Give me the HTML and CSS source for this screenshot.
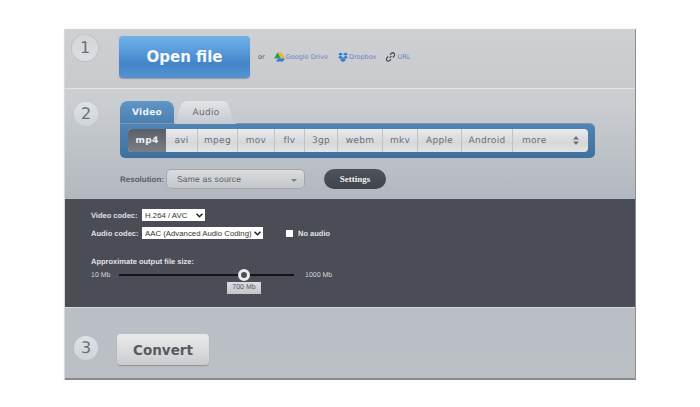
FILE: index.html
```html
<!DOCTYPE html>
<html lang="en">
<head>
    <meta charset="UTF-8">
    <title>Video Converter</title>
    <link rel="stylesheet" href="styles.css">
</head>
<body>
    <main class="card">
        <section class="step step-open">
            <div class="num num-1">1</div>
            <button class="open-btn">Open file</button>
            <div class="sources">
                <span class="or">or</span>
                <a class="source source-drive">
                    <svg width="11" height="10" viewBox="0 0 22 20"><path d="M7 1h8l7 12h-8z" fill="#e8b82c"/><path d="M7 1l7 12H0z" fill="#2f9e55"/><path d="M4 19l4-6h14l-4 6z" fill="#3b78d8"/></svg>
                    Google Drive
                </a>
                <a class="source source-box">
                    <svg width="10" height="10" viewBox="0 0 20 20" fill="#2b7fd4"><path d="M5 1l5 3-5 3.500L0 4.500zM15 1l5 3.500-5 3-5-3.500zM0 10.500L5 7.500l5 3.500-5 3zM20 10.500l-5-3-5 3.500 5 3zM5 15l5-3 5 3v2l-5 3-5-3z"/></svg>
                    Dropbox
                </a>
                <a class="source source-url">
                    <svg width="9" height="10" viewBox="0 0 20 20" fill="none" stroke="#44474c" stroke-width="2.800"><path d="M8 12l4-4"/><path d="M9 5l3-3a4 4 0 0 1 6 6l-3 3"/><path d="M11 15l-3 3a4 4 0 0 1-6-6l3-3"/></svg>
                    URL
                </a>
            </div>
        </section>

        <section class="step step-format">
            <div class="num num-2">2</div>
            <div class="format-main">
                <div class="tabs">
                    <div class="tab tab-on">Video</div>
                    <div class="tab tab-off">Audio</div>
                </div>
                <div class="panel">
                    <div class="formats">
                        <div class="fmt fmt-on">mp4</div>
                        <div class="fmt">avi</div>
                        <div class="fmt">mpeg</div>
                        <div class="fmt">mov</div>
                        <div class="fmt">flv</div>
                        <div class="fmt">3gp</div>
                        <div class="fmt">webm</div>
                        <div class="fmt">mkv</div>
                        <div class="fmt">Apple</div>
                        <div class="fmt">Android</div>
                        <div class="fmt fmt-more">more
                            <svg width="6" height="9" viewBox="0 0 6 9" fill="#6b6e73"><path d="M3 0l3 3.500H0zM3 9L0 5.500h6z"/></svg>
                        </div>
                    </div>
                </div>
                <div class="res-row">
                    <span class="res-label">Resolution:</span>
                    <div class="res-select">Same as source<i class="caret"></i></div>
                    <button class="settings-btn">Settings</button>
                </div>
            </div>
        </section>

        <section class="advanced">
            <div class="codec-row">
                <label class="codec-label">Video codec:</label>
                <span class="select-wrap">
                    <select class="codec-select codec-video"><option>H.264 / AVC</option></select>
                    <svg class="chevron" width="7" height="5" viewBox="0 0 7 5" fill="none" stroke="#222222" stroke-width="1.500"><path d="M0.500 0.800L3.500 3.800 6.500 0.800"/></svg>
                </span>
            </div>
            <div class="codec-row">
                <label class="codec-label">Audio codec:</label>
                <span class="select-wrap">
                    <select class="codec-select codec-audio"><option>AAC (Advanced Audio Coding)</option></select>
                    <svg class="chevron" width="7" height="5" viewBox="0 0 7 5" fill="none" stroke="#222222" stroke-width="1.500"><path d="M0.500 0.800L3.500 3.800 6.500 0.800"/></svg>
                </span>
                <span class="check"></span>
                <span class="no-audio">No audio</span>
            </div>
            <div class="size-title">Approximate output file size:</div>
            <div class="size-row">
                <span class="size-min">10 Mb</span>
                <div class="slider">
                    <span class="thumb"></span>
                    <span class="tip">700 Mb</span>
                </div>
                <span class="size-max">1000 Mb</span>
            </div>
        </section>

        <section class="step step-convert">
            <div class="num num-3">3</div>
            <button class="convert-btn">Convert</button>
        </section>
    </main>
</body>
</html>
```

FILE: styles.css
```css
body {
    margin: 0;
    background-color: #ffffff;
    font-family: "DejaVu Sans", Verdana, sans-serif;
    color: #55585e;
    text-rendering: geometricPrecision;
}
button {
    font-family: inherit;
    padding: 0;
    cursor: pointer;
}
.card {
    width: 570px;
    height: 349px;
    margin: 29px 0 0 65px;
    border-right: 1px solid #8a8d91;
    border-bottom: 2px solid #85888c;
    box-shadow: -1px 0 1px #d8d9db;
    display: flex;
    flex-direction: column;
}
.step {
    display: flex;
    box-sizing: border-box;
}
.num {
    width: 24px;
    height: 24px;
    border-radius: 50%;
    background: linear-gradient(#dfe3e6, #cfd4d8);
    font-size: 16px;
    line-height: 24px;
    text-align: center;
    color: #6c6f74;
    flex: none;
}
.num-1 {
    width: 26px;
    height: 26px;
    line-height: 26px;
    margin-left: -1px;
    background: linear-gradient(#d4d6d9, #dcdfe2);
    box-shadow: 0 0 0 1px #bfc2c5;
}
.num-2 {
    margin-top: 1px;
    margin-left: 1px;
}
.num-3 {
    margin-left: 1px;
}

/* step 1 */
.step-open {
    height: 60px;
    padding: 6px 0 0 8px;
    background: linear-gradient(#cfd0d3, #c8cacd);
    border-bottom: 1px solid #e2e3e5;
}
.open-btn {
    width: 131px;
    height: 42px;
    margin: 1px 0 0 21px;
    border: none;
    border-radius: 4px;
    background: linear-gradient(#70b1e8 0, #5d9fdd 30%, #4484c9 65%, #5492d3 100%);
    box-shadow: 0 1px 1px #8e9aa8;
    color: #f4f8fc;
    font-size: 15px;
    font-weight: bold;
}
.sources {
    display: flex;
    align-items: center;
    height: 42px;
    margin: 1px 0 0 8px;
    font-size: 6.500px;
}
.or {
    margin-right: 9px;
    color: #55585e;
}
.source {
    display: flex;
    align-items: center;
    gap: 1px;
    margin-right: 10px;
    color: #6b86c4;
}
.source-url {
    gap: 2px;
}

/* step 2 */
.step-format {
    height: 110px;
    padding: 12px 0 0 8px;
    background: linear-gradient(#cdd0d3, #b2b8bf);
}
.format-main {
    margin-left: 22px;
    display: flex;
    flex-direction: column;
}
.tabs {
    display: flex;
    height: 23px;
}
.tab {
    height: 23px;
    box-sizing: border-box;
    padding-top: 7px;
    text-align: center;
    font-size: 9px;
    letter-spacing: 0.3px;
}
.tab-on {
    width: 54px;
    font-weight: bold;
    color: #eef4fa;
    border-radius: 8px 8px 0 0;
    background: linear-gradient(#5f96c6, #4a7fae);
}
.tab-off {
    width: 64px;
    color: #696c72;
    background: linear-gradient(#e2e4e6, #c6cacf);
    clip-path: path("M0 23 C5 23 3 0 13 0 H50 C57 0 56 23 64 23 Z");
}
.panel {
    width: 475px;
    height: 34px;
    box-sizing: border-box;
    padding: 5px 7px 6px 8px;
    border-radius: 0 5px 5px 5px;
    background: linear-gradient(#4f84b4, #3f6f9f);
    box-shadow: 0 -1px 0 #7b96b0;
}
.formats {
    display: grid;
    grid-template-columns: 38px 32px 40px 37px 30px 33px 45px 35px 44px 51px 1fr;
    height: 23px;
    border-radius: 4px;
    overflow: hidden;
    background: linear-gradient(#e9eaec, #d6d7d9 60%, #e4e5e7);
}
.fmt {
    display: flex;
    align-items: center;
    justify-content: center;
    font-size: 9px;
    letter-spacing: 0.3px;
    color: #6c6f74;
    border-right: 1px solid #c1c3c6;
}
.fmt-on {
    background: linear-gradient(#5a5e66, #7a7e85);
    color: #f0f1f3;
    font-weight: bold;
    border-right: none;
}
.fmt-more {
    justify-content: space-between;
    padding: 0 9px;
    border-right: none;
}
.res-row {
    display: flex;
    align-items: center;
    margin-top: 11px;
}
.res-label {
    width: 46px;
    font-family: "Liberation Sans", sans-serif;
    font-size: 8px;
    font-weight: bold;
    color: #5c5f65;
}
.res-select {
    position: relative;
    width: 139px;
    height: 20px;
    box-sizing: border-box;
    padding-left: 10px;
    font-family: "Liberation Sans", sans-serif;
    font-size: 8.500px;
    letter-spacing: 0.2px;
    line-height: 19px;
    color: #5c5f65;
    border: 1px solid #a5a9ae;
    border-radius: 5px;
    background: linear-gradient(#dadcdf, #c3c6ca);
}
.caret {
    position: absolute;
    right: 7px;
    top: 9px;
    border-left: 3px solid transparent;
    border-right: 3px solid transparent;
    border-top: 3px solid #7a7d82;
}
.settings-btn {
    width: 62px;
    height: 20px;
    margin-left: 19px;
    border: none;
    border-radius: 10px;
    background: linear-gradient(#4f535b, #3f434a);
    font-family: "Liberation Serif", serif;
    font-size: 9px;
    font-weight: bold;
    color: #eef0f2;
}

/* dark settings block */
.advanced {
    height: 109px;
    box-sizing: border-box;
    padding: 10px 0 0 26px;
    background-color: #4a4d56;
    color: #e0e1e4;
    font-family: "Liberation Sans", sans-serif;
    border-bottom: 1px solid #d5d8db;
}
.codec-row {
    display: flex;
    align-items: center;
    height: 12px;
    margin-bottom: 6px;
}
.codec-label {
    width: 51px;
    font-size: 7.500px;
    font-weight: bold;
    white-space: nowrap;
}
.select-wrap {
    position: relative;
    display: flex;
}
.codec-select {
    appearance: none;
    height: 12px;
    padding: 0 0 0 3px;
    border: none;
    border-radius: 0;
    background-color: #ffffff;
    color: #333333;
    font-family: "Liberation Sans", sans-serif;
    font-size: 7.800px;
}
.codec-video {
    width: 63px;
}
.codec-audio {
    width: 121px;
}
.chevron {
    position: absolute;
    right: 2px;
    top: 4px;
}
.check {
    width: 7px;
    height: 7px;
    margin-left: 23px;
    background-color: #ffffff;
}
.no-audio {
    margin-left: 5px;
    font-size: 7.500px;
    font-weight: bold;
}
.size-title {
    margin-top: 18px;
    font-size: 7.500px;
    font-weight: bold;
}
.size-row {
    display: flex;
    align-items: center;
    height: 12px;
    margin-top: 3px;
    font-size: 7px;
    color: #d4d6d9;
}
.size-min {
    width: 28px;
}
.slider {
    position: relative;
    width: 175px;
    height: 2px;
    background-color: #14151a;
}
.size-max {
    margin-left: 11px;
}
.thumb {
    position: absolute;
    left: 119px;
    top: -5px;
    width: 6px;
    height: 6px;
    border: 3px solid #eceded;
    border-radius: 50%;
    background-color: #4a4d56;
}
.tip {
    position: absolute;
    left: 108px;
    top: 8px;
    width: 34px;
    height: 12px;
    line-height: 12px;
    text-align: center;
    background: linear-gradient(#dcdde0, #c3c5c8);
    color: #55585e;
    font-size: 7px;
}

/* step 3 */
.step-convert {
    flex: 1;
    padding: 28px 0 0 8px;
    background: linear-gradient(#b9bfc4, #bbc0c5);
}
.convert-btn {
    width: 92px;
    height: 31px;
    margin: -2px 0 0 19px;
    border: none;
    border-radius: 4px;
    background: linear-gradient(#e8e9ea, #d8d9db 60%, #c9cbce);
    box-shadow: 0 1px 1px #8f9397;
    font-size: 13.500px;
    font-weight: bold;
    color: #575a62;
}
```
